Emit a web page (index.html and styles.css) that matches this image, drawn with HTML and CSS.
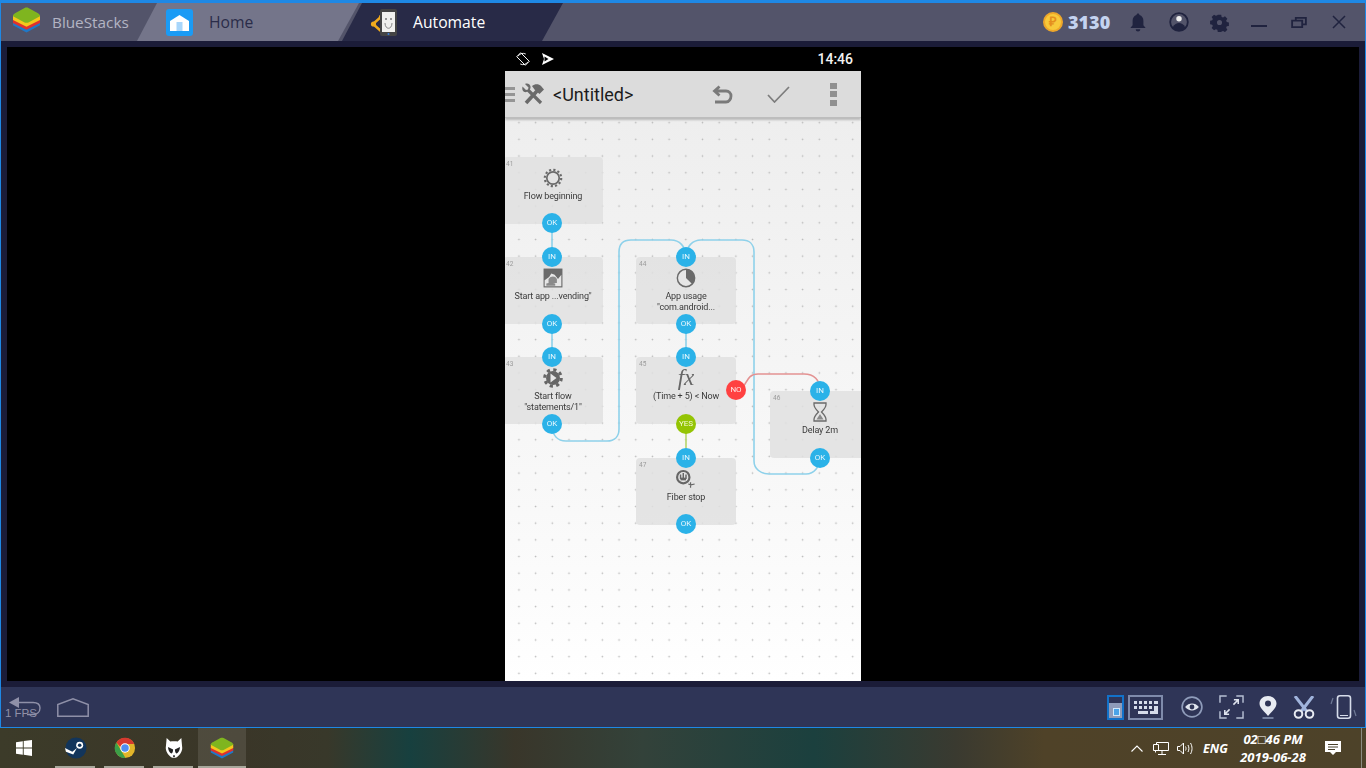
FILE: index.html
```html
<!DOCTYPE html>
<html lang="en">
<head>
<meta charset="utf-8">
<title>BlueStacks - Automate</title>
<link rel="stylesheet" href="styles.css">
</head>
<body>
<div class="window">
  <header class="titlebar">
    <div class="brand">
      <svg class="brand-logo" viewBox="0 0 30 27"><path d="M1 14l14 7 14-7v5l-14 7.500L1 19z" fill="#1f78c8"/><path d="M1 11.500l14 7 14-7v5l-14 7-14-7z" fill="#e0322c"/><path d="M1 8.500l14 7 14-7v5l-14 7-14-7z" fill="#f4c71c"/><path d="M4 6l9-5c1-.5 3-.5 4 0l9 5c2 1 3 2 3 3.500L17 16c-1 .5-3 .5-4 0L1 9.500C1 8 2 7 4 6z" fill="#7fb51f"/></svg>
      <span class="brand-name">BlueStacks</span>
    </div>
    <div class="tab tab-home">
      <span class="home-icon"><svg viewBox="0 0 27 27"><path d="M4 12L13.500 6 23 12v10H4z" fill="#fff"/><rect x="10.500" y="13" width="6" height="9" fill="#a8d6fb"/></svg></span>
      <span class="tab-label">Home</span>
    </div>
    <div class="tab tab-active">
      <svg class="auto-icon" viewBox="0 0 28 27"><path d="M3 15L12 7M3 15l9 8" stroke="#f0a91e" stroke-width="2.400" fill="none"/><circle cx="3.500" cy="15" r="2.600" fill="#f0a91e"/><circle cx="11" cy="8" r="2.200" fill="#f0a91e"/><rect x="10" y="0" width="17" height="27" rx="2" fill="#444"/><rect x="12" y="3" width="13" height="20" fill="#f1f1ee"/><path d="M15 14c0 7 7 7 7 0" stroke="#888" fill="none"/><circle cx="16" cy="10" r="1" fill="#777"/><circle cx="21" cy="10" r="1" fill="#777"/><circle cx="18.500" cy="25" r="1" fill="#3a7fe0"/></svg>
      <span class="tab-label">Automate</span>
    </div>
    <div class="titlebar-right">
      <span class="coin">₽</span>
      <span class="coin-count">3130</span>
      <svg class="tb-icon bell" viewBox="0 0 20 22"><path d="M10 1c1 0 1.600.7 1.600 1.600C14.500 3.400 16 6 16 9v5l2.500 3h-17L4 14V9c0-3 1.500-5.600 4.400-6.400C8.400 1.700 9 1 10 1zM7.500 18.500h5c0 1.500-1 2.500-2.500 2.500s-2.500-1-2.500-2.500z" fill="#20233f"/></svg>
      <svg class="tb-icon user" viewBox="0 0 22 22"><circle cx="11" cy="11" r="9.700" fill="none" stroke="#20233f" stroke-width="2"/><path d="M4 17c2-4 4.500-5 7-5s5 1 7 5c-4 4.500-10 4.500-14 0z" fill="#20233f"/><circle cx="11" cy="7.500" r="3" fill="#f0f0f0"/></svg>
      <svg class="tb-icon gear" viewBox="0 0 20 20"><path fill="#20233f" fill-rule="evenodd" d="M8 1h4l.5 2.500 1.700.7 2.200-1.400 2.800 2.800-1.400 2.200.7 1.700 2.500.5v4l-2.500.5-.7 1.700 1.400 2.200-2.800 2.800-2.200-1.400-1.700.7L12 21H8l-.5-2.500-1.700-.7-2.200 1.400-2.800-2.800 1.400-2.200-.7-1.700L-1 12V8l2.500-.5.7-1.700-1.400-2.200 2.800-2.800 2.200 1.400 1.700-.7zM10 7a3 3 0 1 0 0 6 3 3 0 0 0 0-6z" transform="translate(1 1) scale(.9)"/></svg>
      <span class="minimize"></span>
      <svg class="tb-icon restore" viewBox="0 0 17 12"><path d="M5 3V1h11v7h-3M1 4h11v7H1z" fill="none" stroke="#20233f" stroke-width="2"/></svg>
      <svg class="tb-icon close" viewBox="0 0 14 14"><path d="M1 1l12 12M13 1L1 13" stroke="#20233f" stroke-width="1.500"/></svg>
    </div>
  </header>

  <main class="viewport">
    <section class="screen">
      <div class="phone">
        <div class="statusbar">
          <svg class="status-icon" viewBox="0 0 15 15"><path d="M2.200 4.500A6.200 6.200 0 0 1 10.500 2.200M12.800 10.500A6.200 6.200 0 0 1 4.500 12.800" fill="none" stroke="#fff" stroke-width="1"/><rect x="4.500" y="1" width="6" height="13" transform="rotate(-45 7.500 7.500)" fill="none" stroke="#fff" stroke-width="1"/></svg>
          <svg class="status-icon" viewBox="0 0 14 14"><path d="M1 1l12 6-12 6 2-6z" fill="#fff"/><path d="M3.500 4.500l4 2.500-4 2.500z" fill="#000"/></svg>
          <span class="clock">14:46</span>
        </div>
        <div class="appbar">
          <span class="hamburger"></span>
          <svg class="tools" viewBox="0 0 24 22"><path d="M5 20L16 8" stroke="#6a6a6a" stroke-width="3.600"/><path d="M11 3c3-2.500 7-2 9 0l3 3.500-4.500 4.500-3-2.500-2-2z" fill="#6a6a6a"/><path d="M20 20L7 7" stroke="#6a6a6a" stroke-width="3.200"/><path d="M1.500 3.500L5 7l2-.500.500-2L4 1c2.500-1 5 0 5.500 2.500.3 1.500-.5 3-1.500 4S5 9.500 3.500 9C1.500 8.500 0.800 6 1.500 3.500z" fill="#6a6a6a"/></svg>
          <span class="app-title">&lt;Untitled&gt;</span>
          <svg class="act undo" viewBox="0 0 21 19"><path d="M7.500 1.500L2.500 6l5 4.500M3 6h11c3 0 5 2.200 5 5s-2 6-5 6H3" fill="none" stroke="#7a7a7a" stroke-width="2.800"/></svg>
          <svg class="act check" viewBox="0 0 23 17"><path d="M1 9l6.500 7L22 1" fill="none" stroke="#7d7d7d" stroke-width="1.700"/></svg>
          <span class="dots"><i></i><i></i><i></i></span>
        </div>
        <div class="canvas">
          <svg class="wires" viewBox="0 0 356 563">
            <path class="wire" d="M47 105v34M47 206v34M181 206v34"/>
            <path class="wire" d="M47 306c0 12 6 17 14 17h41c8 0 12-5 12-12V134c0-8 4-12 12-12h40c8 0 15 6 15 17"/>
            <path class="wire" d="M315 339c0 10-6 17-14 17h-37c-8 0-15-5-15-13V134c0-8-5-12-12-12h-41c-8 0-15 6-15 17"/>
            <path class="wire-red" d="M231 272c12 0 8-16 22-16h46c10 0 16 6 16 16"/>
            <path class="wire-green" d="M181 306v34"/>
          </svg>

          <article class="node n41"><span class="num">41</span>
            <svg class="node-icon" viewBox="0 0 20 20"><g fill="none" stroke="#6a6a6a"><circle cx="10" cy="10" r="6.200" stroke-width="1.700"/><circle cx="10" cy="10" r="8.200" stroke-width="2.200" stroke-dasharray="2.150 2.150"/></g></svg>
            <p>Flow beginning</p></article>
          <article class="node n42"><span class="num">42</span>
            <svg class="node-icon" viewBox="0 0 18 18"><rect x=".5" y=".5" width="17" height="17" fill="#6a6a6a"/><path d="M1.500 11l4-3 2-3 3 1 3 4 3-4v10.500H1.500z" fill="#e6e6e6"/><path d="M5 10c2-3 6-3 7.500 0v3.500H5zM3 14l4-1 4 1v2H3z" fill="#8a8a8a"/></svg>
            <p>Start app ...vending"</p></article>
          <article class="node n43"><span class="num">43</span>
            <svg class="node-icon" viewBox="0 0 20 20"><circle cx="10" cy="10" r="7" fill="#666"/><circle cx="10" cy="10" r="8.300" fill="none" stroke="#666" stroke-width="3" stroke-dasharray="3.200 3.320"/><path d="M7.500 5.500l6 4.500-6 4.500z" fill="#e6e6e6"/></svg>
            <p>Start flow<br>"statements/1"</p></article>
          <article class="node n44"><span class="num">44</span>
            <svg class="node-icon" viewBox="0 0 18 18"><circle cx="9" cy="9" r="7.800" fill="#e6e6e6" stroke="#6a6a6a" stroke-width="1.300"/><path d="M9 1.200A7.800 7.800 0 0 1 14.500 14.500L9 9z" fill="#6a6a6a"/></svg>
            <p>App usage<br>"com.android...</p></article>
          <article class="node n45"><span class="num">45</span>
            <span class="fx">fx</span>
            <p>(Time + 5) &lt; Now</p></article>
          <article class="node n46"><span class="num">46</span>
            <svg class="node-icon" viewBox="0 0 18 20"><path d="M3 1h12v1.500c0 3-3 6-4.500 7.500 1.500 1.500 4.500 4.500 4.500 7.500V19H3v-1.500c0-3 3-6 4.500-7.500C6 8.500 3 5.500 3 2.500z" fill="none" stroke="#6a6a6a" stroke-width="1.300"/><path d="M5.500 17.500L9 12l3.500 5.500z" fill="#8a8a8a"/></svg>
            <p>Delay 2m</p></article>
          <article class="node n47"><span class="num">47</span>
            <svg class="node-icon" viewBox="0 0 22 20"><circle cx="8" cy="8" r="6.800" fill="none" stroke="#666" stroke-width="2.400"/><path d="M5 10V5M8 10V3.500M11 10V5" stroke="#666" stroke-width="1.600"/><path d="M5 10h6" stroke="#666" stroke-width="3"/><path d="M16 13.500v6M13.500 15.500l3 1 4-1" stroke="#666" stroke-width="1.300" fill="none"/></svg>
            <p>Fiber stop</p></article>

          <span class="port p-ok1">OK</span>
          <span class="port p-in2">IN</span>
          <span class="port p-ok2">OK</span>
          <span class="port p-in3">IN</span>
          <span class="port p-ok3">OK</span>
          <span class="port p-in4">IN</span>
          <span class="port p-ok4">OK</span>
          <span class="port p-in5">IN</span>
          <span class="port yes p-yes">YES</span>
          <span class="port no p-no">NO</span>
          <span class="port p-in7">IN</span>
          <span class="port p-ok7">OK</span>
          <span class="port p-in6">IN</span>
          <span class="port p-ok6">OK</span>
        </div>
      </div>
    </section>
  </main>

  <nav class="navbar">
    <div class="nav-left">
      <svg class="nav-back" viewBox="0 0 32 20"><path d="M10 5.500h14c4 0 7 1.500 7 5.500s-3 6.500-7 6.500h-6" fill="none" stroke="#8f90a8" stroke-width="1.400"/><path d="M10 0L0 5.500 10 11z" fill="#8f90a8"/></svg>
      <span class="fps">1 FPS</span>
      <svg class="nav-home" viewBox="0 0 32 19"><path d="M.8 18.200V6.500L16 .8l15.200 5.700v11.700z" fill="none" stroke="#8f90a8" stroke-width="1.500"/></svg>
    </div>
    <div class="nav-right">
      <span class="lock"><i></i></span>
      <svg class="keyboard" viewBox="0 0 35 25"><rect x="1" y="1" width="33" height="23" fill="none" stroke="#7f8bab" stroke-width="2"/><path d="M6 6h3v3H6zM11 6h3v3h-3zM16 6h3v3h-3zM21 6h3v3h-3zM26 6h4v3h-4zM6 11h3v3H6zM11 11h3v3h-3zM16 11h3v3h-3zM21 11h3v3h-3zM26 11h4v8h-8v-3h4zM10 16h10v3H10z" fill="#d6dcea"/></svg>
      <svg class="nav-icon eye" viewBox="0 0 24 24"><circle cx="12" cy="12" r="10.800" fill="none" stroke="#8f9cba" stroke-width="1.800"/><path d="M4.500 12c4-5 11-5 15 0-4 5-11 5-15 0z" fill="#dfe4ee"/><circle cx="12" cy="12" r="2.600" fill="#2f3557"/></svg>
      <svg class="nav-icon expand" viewBox="0 0 26 25"><path d="M1 8V1h7M18 1h7v7M25 17v7h-7M8 24H1v-7" fill="none" stroke="#b7c0d4" stroke-width="1.500"/><path d="M15 10l5-5M15.500 5H20v4.500M11 15l-5 5M6 15.500V20h4.500" fill="none" stroke="#dfe4ee" stroke-width="1.600"/></svg>
      <svg class="nav-icon pin" viewBox="0 0 18 23"><path d="M9 0c5 0 8.500 3.500 8.500 7.500C17.500 12 12.500 15.500 9 20 5.500 15.500.5 12 .5 7.500.5 3.500 4 0 9 0z" fill="#e8ebf2"/><circle cx="9" cy="7.500" r="3" fill="#2f3557"/><path d="M3.500 22h11" stroke="#8f9cba" stroke-width="1.400"/></svg>
      <svg class="nav-icon cut" viewBox="0 0 22 23"><path d="M2 0l11.500 15M20 0L8.500 15" stroke="#a0b4dc" stroke-width="3"/><circle cx="5.500" cy="18" r="3.800" fill="none" stroke="#e8ebf2" stroke-width="2"/><circle cx="16.500" cy="18" r="3.800" fill="none" stroke="#e8ebf2" stroke-width="2"/></svg>
      <svg class="nav-icon rotate" viewBox="0 0 27 24"><rect x="7.500" y=".8" width="13" height="22.400" rx="2.500" fill="none" stroke="#d6dcea" stroke-width="1.600"/><path d="M10 20.500h8" stroke="#d6dcea"/><path d="M3 3L1 9M24 15l2 6" stroke="#6f7a96" stroke-width="1.200"/></svg>
    </div>
  </nav>

  <footer class="taskbar">
    <svg class="win" viewBox="0 0 16 16"><path d="M0 2.200l6.800-1v6.400H0zM7.700 1.100L16 0v7.600H7.700zM0 8.500h6.800v6.300L0 13.800zM7.700 8.500H16V16l-8.300-1.200z" fill="#fff"/></svg>
    <div class="task-item used"><svg viewBox="0 0 24 24"><circle cx="12" cy="12" r="11.500" fill="#12355b"/><circle cx="16" cy="9" r="3.800" fill="#fff"/><circle cx="16" cy="9" r="2" fill="#12355b"/><path d="M0 12l8 4 5-4-4 7-8-3z" fill="#fff"/></svg></div>
    <div class="task-item used"><svg viewBox="0 0 24 24"><circle cx="12" cy="12" r="11" fill="#e2b52a"/><path d="M2.600 6A11 11 0 0 1 22 7.500H12C9 7.500 7.500 9.500 7 11z" fill="#d5392f"/><path d="M2.600 6L7.500 14.500 12.500 23A11 11 0 0 1 2.600 6z" fill="#3c9f48"/><circle cx="12" cy="12" r="5.200" fill="#fff"/><circle cx="12" cy="12" r="4.100" fill="#4f8ef0"/></svg></div>
    <div class="task-item used"><svg viewBox="0 0 20 24"><path d="M2 1l4 4c2-.6 6-.6 8 0l4-4 1 11c0 5-5 11-9 11S1 17 1 12z" fill="#fff"/><path d="M3.500 11l5.500 2.500c0 3-1 4.500-2 4.500-2-1-3.500-4-3.500-7zM16.500 11L11 13.500c0 3 1 4.500 2 4.500 2-1 3.500-4 3.500-7z" fill="#222"/><path d="M9 20h2v2H9z" fill="#333"/></svg></div>
    <div class="task-item used current"><svg viewBox="0 0 30 27"><path d="M1 14l14 7 14-7v5l-14 7.500L1 19z" fill="#1f78c8"/><path d="M1 11.500l14 7 14-7v5l-14 7-14-7z" fill="#e0322c"/><path d="M1 8.500l14 7 14-7v5l-14 7-14-7z" fill="#f4c71c"/><path d="M4 6l9-5c1-.5 3-.5 4 0l9 5c2 1 3 2 3 3.500L17 16c-1 .5-3 .5-4 0L1 9.500C1 8 2 7 4 6z" fill="#7fb51f"/></svg></div>
    <div class="tray">
      <svg class="tray-icon chev" viewBox="0 0 12 7"><path d="M.5 6.500L6 1l5.500 5.500" fill="none" stroke="#fff" stroke-width="1.100"/></svg>
      <svg class="tray-icon net" viewBox="0 0 16 13"><path d="M3.500 2.500V.5h12v8h-12M.5 2.500h5v6h-5zM2.500 8.500v2M9 8.500v4M5 12.500h8" fill="none" stroke="#fff"/></svg>
      <svg class="tray-icon vol" viewBox="0 0 16 13"><path d="M.5 4.500h2.500L6.500 1v11L3 8.500H.5z" fill="none" stroke="#fff"/><path d="M8.500 4.500c.7 1.500.7 2.500 0 4M11 3c1.200 2.500 1.200 4.500 0 7M13.500 1c2 3.500 2 7.500 0 11" fill="none" stroke="#fff"/></svg>
      <span class="lang">ENG</span>
      <div class="datetime"><span>02□46 PM</span><span>2019-06-28</span></div>
      <svg class="tray-icon notify" viewBox="0 0 16 16"><path d="M0 1h16v11h-5l-3 3-3-3H0z" fill="#fff"/><path d="M3 4.500h10M3 7h10M3 9.500h7" stroke="#49402a"/></svg>
      <span class="show-desktop"></span>
    </div>
  </footer>
</div>
</body>
</html>
```
FILE: styles.css
```css
* { box-sizing: border-box; }
html, body { margin: 0; height: 100%; overflow: hidden; background: #000; }
.window { width: 1366px; height: 768px; display: flex; flex-direction: column; font-family: "Open Sans", "Liberation Sans", sans-serif; }

/* Title bar */
.titlebar { height: 41px; flex: none; display: flex; align-items: center; background: #53546a; border-top: 3px solid #1e88e5; border-left: 1px solid #1e88e5; border-right: 1px solid #1e88e5; overflow: hidden; }
.brand { width: 136px; flex: none; display: flex; align-items: center; padding-left: 11px; gap: 11px; }
.brand-logo { width: 29px; height: 26px; flex: none; margin-top: -4px; }
.brand-name { font-size: 15.3px; color: #b3b4c4; }
.tab { height: 38px; flex: none; display: flex; align-items: center; clip-path: polygon(20px 0, 100% 0, calc(100% - 21px) 100%, 0 100%); }
.tab-home { width: 222px; background: #74758a; padding-left: 29px; }
.tab-active { width: 221px; margin-left: -17px; background: #282a47; padding-left: 28px; }
.home-icon { width: 27px; height: 27px; background: #1a9bf5; border-radius: 3px; display: block; flex: none; }
.home-icon svg { display: block; }
.tab-label { font-size: 15.7px; }
.tab-home .tab-label { color: #2a2c49; margin-left: 16px; }
.tab-active .tab-label { color: #fff; margin-left: 15px; }
.auto-icon { width: 28px; height: 27px; flex: none; }
.titlebar-right { margin-left: auto; display: flex; align-items: center; height: 100%; padding-right: 19px; }
.coin { width: 20px; height: 20px; border-radius: 50%; background: #f8c93a; border: 2px solid #eea72a; color: #e58f1d; font: 700 13px/16px "Liberation Sans", sans-serif; text-align: center; }
.coin-count { font: 800 18px "Open Sans", sans-serif; color: #c4d3f0; margin-left: 5px; width: 44px; }
.tb-icon { flex: none; display: block; }
.bell { width: 18px; height: 21px; margin-left: 17px; }
.user { width: 20px; height: 20px; margin-left: 22px; }
.gear { width: 19px; height: 19px; margin-left: 21px; }
.minimize { width: 16px; height: 2px; background: #20233f; margin: 8px 0 0 22px; }
.restore { width: 16px; height: 11px; margin-left: 24px; }
.close { width: 14px; height: 14px; margin-left: 25px; }

/* Emulator viewport */
.viewport { flex: 1; min-height: 0; background: #1b1c38; padding: 6px; border-left: 1px solid #1e88e5; border-right: 1px solid #1e88e5; }
.screen { height: 100%; background: #000; display: flex; justify-content: center; }
.phone { width: 356px; height: 100%; display: flex; flex-direction: column; }
.statusbar { height: 24px; flex: none; background: #000; display: flex; align-items: center; gap: 11px; padding: 0 8px 0 11px; }
.status-icon { width: 14px; height: 14px; }
.clock { margin-left: auto; font: 500 14px Roboto, sans-serif; color: #f2f2f2; }
.appbar { height: 47px; flex: none; background: #dcdcdc; display: flex; align-items: center; position: relative; z-index: 2; box-shadow: 0 2px 2px rgba(0,0,0,.22); border-bottom: 1px solid #bdbdbd; }
.hamburger { width: 10px; height: 15px; flex: none; border-top: 3px solid #959595; border-bottom: 3px solid #959595; position: relative; }
.hamburger::after { content: ""; position: absolute; left: 0; right: 0; top: 3px; height: 3px; background: #959595; }
.tools { width: 24px; height: 22px; margin-left: 6px; flex: none; }
.app-title { font: 400 18px Roboto, sans-serif; color: #1c1c1c; margin-left: 8px; padding-top: 1px; }
.act { flex: none; display: block; }
.undo { width: 21px; height: 19px; margin-left: auto; }
.check { width: 23px; height: 17px; margin-left: 34px; }
.dots { display: flex; flex-direction: column; gap: 2.500px; margin: 0 24px 0 40px; }
.dots i { display: block; width: 7px; height: 6px; background: #909090; }

/* Flow canvas */
.canvas { flex: 1; position: relative; overflow: hidden; background-color: #fafafa; background-image: radial-gradient(circle, #b8b8b8 .7px, transparent 1.100px), linear-gradient(#eeeeee, #f3f3f3 30%, #f9f9f9 70%, #fff); background-size: 16.7px 16.7px, 100% 100%; background-position: 5.6px -3.7px, 0 0; filter: blur(.3px); }
.wires { position: absolute; inset: 0; width: 100%; height: 100%; }
.wire { fill: none; stroke: #8ed1ea; stroke-width: 1.600; }
.wire-red { fill: none; stroke: #e39292; stroke-width: 1.600; }
.wire-green { fill: none; stroke: #b5d56a; stroke-width: 1.600; }
.node { position: absolute; width: 100px; height: 67px; background: rgba(224,224,224,.85); border-radius: 4px; display: flex; flex-direction: column; align-items: center; padding-top: 11px; }
.node p { margin: 0; font: 400 9px/11px Roboto, sans-serif; letter-spacing: -.15px; color: #3a3a3a; text-align: center; white-space: nowrap; }
.node-icon { width: 20px; height: 20px; display: block; margin-bottom: 3px; flex: none; }
.num { position: absolute; left: 3px; top: 3px; font: 400 6.500px Roboto, sans-serif; color: #9a9a9a; }
.fx { font: italic 23px/20px "Liberation Serif", serif; color: #666; height: 20px; margin-bottom: 3px; }
.n41 { left: -2px; top: 39px; }
.n42 { left: -2px; top: 139px; }
.n43 { left: -2px; top: 239px; }
.n44 { left: 131px; top: 139px; }
.n45 { left: 131px; top: 239px; }
.n46 { left: 265px; top: 273px; }
.n47 { left: 131px; top: 340px; }
.port { position: absolute; width: 20px; height: 20px; margin: -10px 0 0 -10px; border-radius: 50%; background: #2bb2e8; color: #e8f7fd; font: 400 8px/20px Roboto, sans-serif; text-align: center; }
.yes { background: #94c404; color: #f4fbd8; }
.no { background: #ff4141; color: #ffe8e8; }
.p-ok1 { left: 47px; top: 105px; }
.p-in2 { left: 47px; top: 139px; }
.p-ok2 { left: 47px; top: 206px; }
.p-in3 { left: 47px; top: 239px; }
.p-ok3 { left: 47px; top: 306px; }
.p-in4 { left: 181px; top: 139px; }
.p-ok4 { left: 181px; top: 206px; }
.p-in5 { left: 181px; top: 239px; }
.p-yes { left: 181px; top: 306px; }
.p-no { left: 231px; top: 272px; }
.p-in7 { left: 181px; top: 340px; }
.p-ok7 { left: 181px; top: 406px; }
.p-in6 { left: 315px; top: 273px; }
.p-ok6 { left: 315px; top: 340px; }

/* Emulator bottom bar */
.navbar { height: 41px; flex: none; background: #2f3557; border-left: 1px solid #1e88e5; border-right: 1px solid #1e88e5; border-bottom: 1px solid #1e88e5; display: flex; align-items: center; justify-content: space-between; padding: 0 8px 0 8px; }
.nav-left { display: flex; align-items: center; position: relative; height: 100%; }
.nav-back { width: 32px; height: 20px; }
.fps { position: absolute; left: -4px; top: 20px; font: 400 11.500px "Liberation Sans", sans-serif; color: #8f90a8; }
.nav-home { width: 32px; height: 19px; margin-left: 16px; }
.nav-right { display: flex; align-items: center; }
.lock { width: 17px; height: 25px; border: 2px solid #1272c9; background: #2f3557; position: relative; display: block; }
.lock i { position: absolute; left: 0; right: 0; bottom: 0; height: 15px; background: #8f9cba; }
.lock i::after { content: ""; position: absolute; left: 4px; top: 5px; width: 5px; height: 6px; background: #4aa3e8; border: 1px solid #cfe8fb; }
.keyboard { width: 35px; height: 25px; margin-left: 4px; flex: none; }
.nav-icon { display: block; flex: none; }
.eye { width: 22px; height: 22px; margin-left: 18px; }
.expand { width: 25px; height: 24px; margin-left: 16px; }
.pin { width: 18px; height: 23px; margin-left: 15px; }
.cut { width: 22px; height: 23px; margin-left: 16px; }
.rotate { width: 27px; height: 24px; margin-left: 15px; }

/* Windows taskbar */
.taskbar { height: 40px; flex: none; display: flex; align-items: center; background: linear-gradient(90deg, #3c3b29 0%, #3a3628 17.5%, #38382a 24%, #17403f 30%, #39362a 37.7%, #33423a 47%, #1b403e 59.6%, #3a3a30 70%, #4f4228 76.4%, #4d4229 100%); }
.win { width: 16px; height: 16px; margin-left: 16px; flex: none; }
.task-item { width: 49px; height: 40px; flex: none; display: flex; align-items: center; justify-content: center; position: relative; }
.task-item svg { width: 22px; height: 22px; }
.win + .task-item { margin-left: 19px; }
.used::after { content: ""; position: absolute; left: 4px; right: 5px; bottom: 0; height: 2px; background: #a8a89c; }
.current { background: rgba(255,255,255,.1); width: 48px; }
.current svg { width: 24px; height: 24px; }
.current::after { left: 0; right: 0; }
.tray { margin-left: auto; display: flex; align-items: center; height: 100%; color: #fff; }
.tray-icon { flex: none; display: block; }
.chev { width: 12px; height: 7px; }
.net { width: 16px; height: 13px; margin-left: 10px; }
.vol { width: 16px; height: 13px; margin-left: 8px; }
.lang { font: italic 700 12.500px "Open Sans", sans-serif; margin-left: 10px; width: 23px; }
.datetime { display: flex; flex-direction: column; align-items: center; font: italic 700 13px/18px "Open Sans", sans-serif; margin-left: 14px; width: 66px; }
.notify { width: 16px; height: 16px; margin-left: 19px; }
.show-desktop { width: 1px; height: 100%; background: #8b8b80; margin: 0 4px 0 20px; }
```
